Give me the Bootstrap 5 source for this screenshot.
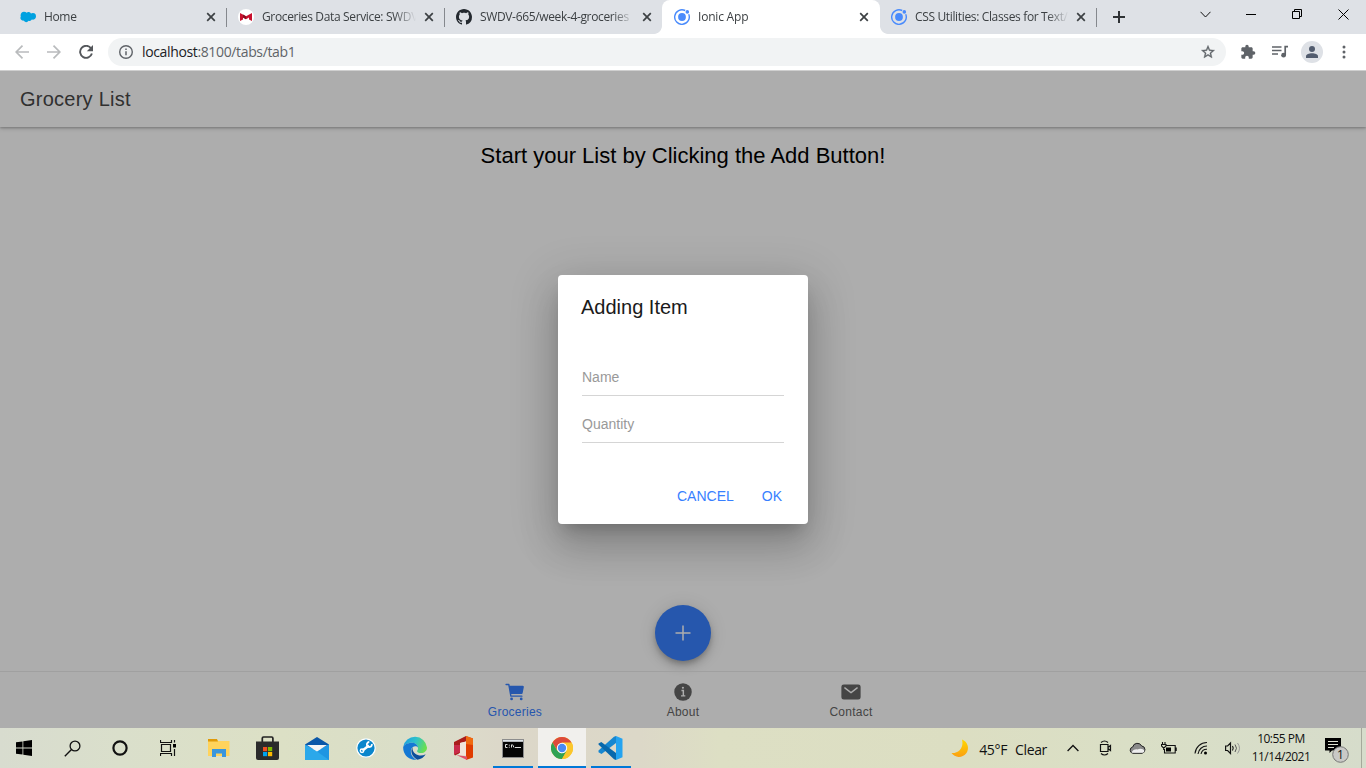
<!DOCTYPE html>
<html lang="en">
<head>
<meta charset="utf-8">
<title>Ionic App</title>
<link href="https://cdn.jsdelivr.net/npm/bootstrap@5.3.0/dist/css/bootstrap.min.css" rel="stylesheet">
<style>
  body{width:1366px;height:768px;overflow:hidden;font-family:"Liberation Sans",Arial,sans-serif;background:#fff;line-height:1.2}
  svg{display:block;flex:none}
  .ui-sys{font-family:"Open Sans","Noto Sans",sans-serif}
  /* tab strip */
  .strip{height:34px;background:#dee1e6;padding-left:8px}
  .b-tab{position:relative;width:218px;height:34px;padding-left:12px;color:#3c4043;font-size:12px;letter-spacing:-.35px}
  .b-tab .ttl{width:154px;margin-left:8px;white-space:nowrap;line-height:18px;-webkit-mask-image:linear-gradient(90deg,#000 132px,transparent 154px);mask-image:linear-gradient(90deg,#000 132px,transparent 154px)}
  .b-tab .x{margin-left:5px}
  .b-tab.sep::after{content:"";position:absolute;right:-1px;top:8px;width:1px;height:19px;background:#85888d}
  .b-tab.on{background:#fff;border-radius:8px 8px 0 0}
  .b-tab.on .x,.b-tab.last .x{margin-left:4px}
  .b-tab.on::before,.b-tab.on::after{content:"";position:absolute;bottom:0;width:8px;height:8px}
  .b-tab.on::before{left:-8px;background:radial-gradient(circle at 0 0,#dee1e6 7.5px,#fff 8.2px)}
  .b-tab.on::after{right:-8px;background:radial-gradient(circle at 100% 0,#dee1e6 7.5px,#fff 8.2px)}
  .b-tab.last{width:216px;padding-left:11px}
  .win{width:46px;height:28px}
  /* toolbar */
  .tools{height:37px;background:#fff;border-bottom:1px solid #cfcfcf;padding-left:6px}
  .tbtn{width:32px;height:36px}
  .omni{width:1118px;height:28px;border-radius:14px;background:#f1f3f4;margin-left:6px;padding:0 10px;font-size:14px;color:#5f6368;letter-spacing:-.36px}
  .omni b{font-weight:400;color:#202124}
  .avatar{width:22px;height:22px;background:#dee1e6}
  /* app */
  .app{height:657px;background:#fff}
  .app-head{height:56px;padding-left:20px;font-size:20px;letter-spacing:.25px;color:#484848;box-shadow:0 1px 2px rgba(0,0,0,.2),0 2px 4px rgba(0,0,0,.14);clip-path:inset(0 0 -6px 0)}
  .hint{font-size:22px;line-height:26px;padding-top:16px;color:#000}
  .fab{width:56px;height:56px;background:#3880ff;margin-bottom:10px;box-shadow:0 3px 5px -1px rgba(0,0,0,.2),0 6px 10px 0 rgba(0,0,0,.14),0 1px 18px 0 rgba(0,0,0,.12)}
  .a-tabs{height:57px;border-top:1px solid #ececec}
  .a-tab{width:168px;padding-top:9px;font-size:12px;letter-spacing:.25px;color:#666}
  .a-tab span{line-height:14px;margin-top:2px}
  .a-tab.cur{color:#3880ff}
  .dim{background:rgba(0,0,0,.32)}
  .dlg{width:250px;height:249px;border-radius:4px;background:#fff;padding:20px 26px 14px 24px;box-shadow:0 11px 15px -7px rgba(0,0,0,.2),0 24px 38px 3px rgba(0,0,0,.14),0 9px 46px 8px rgba(0,0,0,.12)}
  .dlg h2{font-size:20px;font-weight:400;line-height:24px;margin:0 0 39px -1px;color:#1a1a1a}
  .fld{height:38px;border-bottom:1px solid #d5d5d5;font-size:14px;color:#999;line-height:39px;margin-bottom:9px;width:202px}
  .act{font-size:14px;color:#3880ff;gap:28px;padding-top:36px}
  /* taskbar */
  .task{height:40px;background:linear-gradient(90deg,#d8dccf 0,#dadfcb 120px,#dce0c5 280px,#dadec8 400px,#dcdbca 460px,#dcd7c9 510px,#dcd8c8 640px,#dddfc4 720px,#dcdec2 960px,#dadfc6 1130px,#d6dccb 1366px);color:#111}
  .ti{width:48px;height:40px}
  .ti.w{width:49px}
  .run::after{content:"";position:absolute;bottom:0;width:40px;height:2px;background:#0078d7}
  .run.act-w{background:#f1f0ed;width:48px}
  .run.act-w::after{width:48px}
  .tr{width:32px;height:40px}
  .clock{width:72px;font-size:12px;line-height:18px;padding-top:2px;letter-spacing:-.5px}
  .wx{font-size:14px;letter-spacing:-.35px}
  .edge-line{width:5px;height:40px;border-left:1px solid #a5a99b}
</style>
</head>
<body class="d-flex flex-column">
<svg width="0" height="0" class="position-absolute">
  <defs>
    <symbol id="x" viewBox="0 0 16 16"><path d="M4.200 4.200l7.600 7.600M11.800 4.200l-7.600 7.600" stroke="#3c4043" stroke-width="1.700"/></symbol>
    <symbol id="ionic" viewBox="0 0 16 16"><circle cx="8" cy="8" r="3.900" fill="#4a8bfc"/><path d="M11.200 1.500A7.300 7.300 0 1 0 14.700 5.200" fill="none" stroke="#4a8bfc" stroke-width="1.400"/><circle cx="13.300" cy="2.900" r="1.800" fill="#4a8bfc"/></symbol>
  </defs>
</svg>

<header class="strip ui-sys d-flex">
  <div class="b-tab sep d-flex align-items-center">
    <svg width="16" height="16" viewBox="0 0 16 16"><path d="M6.600 3.700a3 3 0 0 1 4.400.8 3.200 3.200 0 0 1 5 2.800c0 2.400-2.100 4-4.200 3.300a2.600 2.600 0 0 1-3.200 1.200 2.900 2.900 0 0 1-5-.2A2.700 2.700 0 0 1 .8 7.600C0 5.200 1.600 2.700 4 2.700c1.100 0 2 .3 2.600 1z" fill="#00a1e0"/></svg>
    <span class="ttl">Home</span><svg class="x" width="16" height="16"><use href="#x"/></svg>
  </div>
  <div class="b-tab sep d-flex align-items-center">
    <svg width="16" height="16" viewBox="0 0 16 16"><circle cx="8" cy="8" r="8" fill="#fff"/><path d="M2 4l6 3.300L14 4v8l-3-1.500V8.500L8 10.300 5 8.500v2L2 12z" fill="#c8102e"/><path d="M5 5.600l3 1.700v3L5 8.500z" fill="#8a0f20"/></svg>
    <span class="ttl">Groceries Data Service: SWDV</span><svg class="x" width="16" height="16"><use href="#x"/></svg>
  </div>
  <div class="b-tab d-flex align-items-center">
    <svg width="16" height="16" viewBox="0 0 16 16"><path fill="#24292f" d="M8 0C3.580 0 0 3.580 0 8c0 3.540 2.290 6.530 5.470 7.590.4.070.55-.17.55-.38 0-.19-.01-.82-.01-1.490-2.010.37-2.530-.49-2.690-.94-.09-.23-.48-.94-.82-1.130-.28-.15-.68-.52-.01-.53.63-.01 1.080.58 1.230.82.720 1.210 1.870.87 2.330.66.070-.52.28-.87.51-1.070-1.780-.2-3.640-.89-3.640-3.950 0-.87.31-1.590.82-2.150-.08-.2-.36-1.020.08-2.120 0 0 .67-.21 2.200.82.64-.18 1.320-.27 2-.27s1.360.09 2 .27c1.530-1.040 2.200-.82 2.200-.82.44 1.100.16 1.920.08 2.120.51.56.82 1.270.82 2.150 0 3.070-1.870 3.750-3.650 3.950.29.25.54.73.54 1.480 0 1.070-.01 1.930-.01 2.200 0 .21.15.46.55.38A8.010 8.010 0 0 0 16 8c0-4.420-3.580-8-8-8z"/></svg>
    <span class="ttl">SWDV-665/week-4-groceries</span><svg class="x" width="16" height="16"><use href="#x"/></svg>
  </div>
  <div class="b-tab on d-flex align-items-center">
    <svg width="16" height="16"><use href="#ionic"/></svg>
    <span class="ttl" style="letter-spacing:-.2px">Ionic App</span><svg class="x" width="16" height="16"><use href="#x"/></svg>
  </div>
  <div class="b-tab last sep d-flex align-items-center">
    <svg width="16" height="16"><use href="#ionic"/></svg>
    <span class="ttl">CSS Utilities: Classes for Text/</span><svg class="x" width="16" height="16"><use href="#x"/></svg>
  </div>
  <div class="d-flex align-items-center ps-3"><svg width="13" height="12" viewBox="-1 0 13 12"><path d="M6 0v12M0 6h12" stroke="#2f3235" stroke-width="2"/></svg></div>
  <div class="ms-auto d-flex">
    <div class="win d-flex align-items-center justify-content-center"><svg width="11" height="7" viewBox="0 0 11 7"><path d="M.5.8l5 5.200 5-5.200" fill="none" stroke="#111"/></svg></div>
    <div class="win d-flex align-items-center justify-content-center"><svg width="10" height="10"><path d="M0 5.500h10" stroke="#000"/></svg></div>
    <div class="win d-flex align-items-center justify-content-center"><svg width="10" height="10"><path d="M.5 2.500h7v7h-7zM2.500 2.500v-2h7v7h-2" fill="none" stroke="#000"/></svg></div>
    <div class="win d-flex align-items-center justify-content-center"><svg width="11" height="11"><path d="M.5.5l10 10M10.500.5l-10 10" stroke="#000"/></svg></div>
  </div>
</header>

<nav class="tools ui-sys d-flex align-items-center">
  <div class="tbtn d-flex align-items-center justify-content-center"><svg width="14" height="14" viewBox="0 0 14 14"><path d="M14 7H1.500M7.500.7L1.200 7l6.300 6.300" fill="none" stroke="#b9bbbd" stroke-width="1.700"/></svg></div>
  <div class="tbtn d-flex align-items-center justify-content-center"><svg width="14" height="14" viewBox="0 0 14 14"><path d="M0 7h12.500M6.500.7L12.800 7l-6.300 6.300" fill="none" stroke="#b9bbbd" stroke-width="1.700"/></svg></div>
  <div class="tbtn d-flex align-items-center justify-content-center"><svg width="14" height="14" viewBox="0 0 14 14"><path d="M12 3.300A6 6 0 1 0 12.900 8.500" fill="none" stroke="#54575b" stroke-width="1.900"/><path d="M14 0v6.200H7.800z" fill="#54575b"/></svg></div>
  <div class="omni d-flex align-items-center">
    <svg width="16" height="16" viewBox="0 0 16 16"><circle cx="8" cy="8" r="6.300" fill="none" stroke="#5f6368" stroke-width="1.400"/><path d="M8 7.200v4M8 4.500v1.500" stroke="#5f6368" stroke-width="1.500"/></svg>
    <span class="ms-2"><b>localhost</b>:8100/tabs/tab1</span>
    <svg class="ms-auto" width="16" height="16" viewBox="0 0 24 24"><path fill="#5f6368" stroke="#5f6368" stroke-width=".5" d="M22 9.240l-7.190-.62L12 2 9.190 8.630 2 9.240l5.460 4.730L5.820 21 12 17.270 18.180 21l-1.630-7.030L22 9.240zM12 15.400l-3.760 2.270 1-4.280-3.320-2.880 4.380-.38L12 6.100l1.710 4.040 4.380.38-3.320 2.880 1 4.280L12 15.400z"/></svg>
  </div>
  <div class="tbtn d-flex align-items-center justify-content-center ms-1"><svg class="ms-1" width="16" height="16" viewBox="0 0 24 24"><path fill="#5f6368" d="M20.500 11H19V7c0-1.100-.9-2-2-2h-4V3.500a2.500 2.500 0 0 0-5 0V5H4c-1.100 0-1.990.9-1.990 2v3.800H3.500c1.490 0 2.700 1.210 2.700 2.700s-1.210 2.700-2.700 2.700H2V20c0 1.100.9 2 2 2h3.800v-1.500c0-1.490 1.210-2.700 2.700-2.700s2.700 1.210 2.700 2.700V22H17c1.100 0 2-.9 2-2v-4h1.500a2.500 2.500 0 0 0 0-5z"/></svg></div>
  <div class="tbtn d-flex align-items-center justify-content-center"><svg class="ms-1" width="17" height="14" viewBox="0 0 17 14"><path d="M0 2h9.500M0 5.500h9.500M0 9h6" stroke="#5f6368" stroke-width="1.500"/><path d="M16 1.700h-2.800V10" fill="none" stroke="#5f6368" stroke-width="1.700"/><circle cx="11.600" cy="10.200" r="2.400" fill="#5f6368"/></svg></div>
  <div class="tbtn d-flex align-items-center justify-content-center ps-1"><div class="avatar rounded-circle d-flex align-items-center justify-content-center"><svg width="12" height="12" viewBox="0 0 12 12"><circle cx="6" cy="3" r="3" fill="#525c6e"/><path d="M0 12v-1.600C0 8.200 3 7.300 6 7.300s6 .9 6 3.100V12z" fill="#525c6e"/></svg></div></div>
  <div class="tbtn d-flex align-items-center justify-content-center ps-1"><svg width="4" height="14" viewBox="0 0 4 14"><g fill="#5f6368"><circle cx="2" cy="2" r="1.500"/><circle cx="2" cy="7" r="1.500"/><circle cx="2" cy="12" r="1.500"/></g></svg></div>
</nav>

<main class="app position-relative d-flex flex-column">
  <div class="app-head d-flex align-items-center">Grocery List</div>
  <div class="hint text-center">Start your List by Clicking the Add Button!</div>
  <div class="fab rounded-circle d-flex align-items-center justify-content-center mt-auto mx-auto"><svg width="16" height="16"><path d="M8 .5v15M.5 8h15" stroke="#fff" stroke-width="1.500"/></svg></div>
  <div class="a-tabs d-flex justify-content-center">
    <div class="a-tab cur d-flex flex-column align-items-center"><svg width="22" height="22" viewBox="0 0 512 512"><g fill="currentColor"><circle cx="176" cy="416" r="32"/><circle cx="400" cy="416" r="32"/><path d="M456.800 120.780a23.920 23.920 0 0 0-18.560-8.780H133.890l-6.130-34.780A16 16 0 0 0 112 64H48a16 16 0 0 0 0 32h50.580l45.660 258.780A16 16 0 0 0 160 368h256a16 16 0 0 0 0-32H173.420l-5.640-32h241.660A24.070 24.070 0 0 0 433 284.710l28.800-144a24 24 0 0 0-5-19.930z"/></g></svg><span>Groceries</span></div>
    <div class="a-tab d-flex flex-column align-items-center"><svg width="22" height="22" viewBox="0 0 512 512"><circle cx="256" cy="256" r="204" fill="currentColor"/><circle cx="254" cy="158" r="25" fill="#fff"/><path d="M220 220h44v124M210 346h100" fill="none" stroke="#fff" stroke-width="34"/></svg><span>About</span></div>
    <div class="a-tab d-flex flex-column align-items-center"><svg width="22" height="22" viewBox="0 0 512 512"><path fill="currentColor" d="M424 80H88a56.060 56.060 0 0 0-56 56v240a56.060 56.060 0 0 0 56 56h336a56.060 56.060 0 0 0 56-56V136a56.060 56.060 0 0 0-56-56zm-14.180 92.630-144 112a16 16 0 0 1-19.640 0l-144-112a16 16 0 1 1 19.640-25.260L256 251.730l134.180-104.360a16 16 0 0 1 19.640 25.260z"/></svg><span>Contact</span></div>
  </div>
  <div class="dim position-absolute top-0 start-0 w-100 h-100 d-flex align-items-center justify-content-center">
    <section class="dlg">
      <h2>Adding Item</h2>
      <div class="fld">Name</div>
      <div class="fld">Quantity</div>
      <div class="act d-flex justify-content-end"><span>CANCEL</span><span>OK</span></div>
    </section>
  </div>
</main>

<footer class="task ui-sys d-flex">
  <div class="ti d-flex align-items-center justify-content-center"><svg width="16" height="16" viewBox="0 0 16 16"><path d="M0 2.300L6.500 1.400V7.600H0zM7.300 1.300L16 0v7.600H7.300zM0 8.400h6.500v6.200L0 13.700zM7.300 8.400H16V16l-8.700-1.200z"/></svg></div>
  <div class="ti d-flex align-items-center justify-content-center"><svg width="17" height="17" viewBox="0 0 17 17"><circle cx="11" cy="6" r="4.900" fill="none" stroke="#111" stroke-width="1.300"/><path d="M7.500 9.500L.8 16.200" stroke="#111" stroke-width="1.400"/></svg></div>
  <div class="ti d-flex align-items-center justify-content-center"><svg width="16" height="16"><circle cx="8" cy="8" r="6.600" fill="none" stroke="#111" stroke-width="2.200"/></svg></div>
  <div class="ti d-flex align-items-center justify-content-center"><svg width="17" height="16"><path d="M.5 0v2.500h11V0M.5 16v-2.500h11V16M1.500 4.500h9v7h-9z" fill="none" stroke="#111" stroke-width="1.200"/><path d="M14.500 0v2.500M14.500 9v7" stroke="#111" stroke-width="1.200"/><path d="M13 4h3v3.500h-3z"/></svg></div>
  <div class="ti w d-flex align-items-center justify-content-center" style="margin-left:2px"><svg width="22" height="20" viewBox="0 0 22 20"><path d="M0 1h8.500l1.500 2H21.500v15H0z" fill="#ffd35c"/><path d="M0 1h9l1 2.500H0z" fill="#e09a08"/><path d="M4 19V11h14v8h-4V15.500H8V19z" fill="#3a96dd"/></svg></div>
  <div class="ti w d-flex align-items-center justify-content-center"><svg width="23" height="24" viewBox="0 0 23 24"><path d="M6.300 6V2.200a1.200 1.200 0 0 1 1.200-1.200h8.200a1.200 1.200 0 0 1 1.200 1.200V6" fill="none" stroke="#222" stroke-width="1.700"/><path d="M0 5.500h23V22a2 2 0 0 1-2 2H2a2 2 0 0 1-2-2z" fill="#2b2b2b"/><path fill="#f25022" d="M7 11h4.200v4.200H7z"/><path fill="#7fba00" d="M12 11h4.200v4.200H12z"/><path fill="#00a4ef" d="M7 16h4.200v4.200H7z"/><path fill="#ffb900" d="M12 16h4.200v4.200H12z"/></svg></div>
  <div class="ti w d-flex align-items-center justify-content-center"><svg width="24" height="23" viewBox="0 0 24 23"><path d="M0 7.500L12 0l12 7.500V12H0z" fill="#0a57a8"/><path d="M0 7.500l12 6.500 12-6.500V23H0z" fill="#2ba8ea"/><path d="M12 14.500L24 7.500V23z" fill="#1e96e2"/><path d="M2 8h20l-10 6.500z" fill="#f5f5f5"/></svg></div>
  <div class="ti w d-flex align-items-center justify-content-center"><svg width="20" height="20" viewBox="0 0 20 20"><circle cx="10" cy="10" r="9.200" fill="#0a86cc" stroke="#fff" stroke-width="1.200"/><path d="M6.500 12.500l6.500-5" stroke="#fff" stroke-width="2.500"/><circle cx="6" cy="12.800" r="1.700" fill="none" stroke="#fff" stroke-width="1.500"/><path d="M15.800 6a2.500 2.500 0 1 1-2.500-2" fill="none" stroke="#fff" stroke-width="1.800"/></svg></div>
  <div class="ti w d-flex align-items-center justify-content-center"><svg width="24" height="24" viewBox="0 0 24 24"><defs><linearGradient id="eg" x1="0" x2="1" y1=".2" y2=".5"><stop offset="0" stop-color="#1b9de2"/><stop offset=".5" stop-color="#2fc2c9"/><stop offset="1" stop-color="#6be04e"/></linearGradient></defs><path d="M.2 11A12 12 0 0 1 24 11.500c0 3.600-2.700 5.500-5.700 5.500-2.800 0-4.300-1-4.300-1.800 0-.6 1-1 1-3C15 9 12 6.800 8.800 6.800 4 6.800.6 9.500.2 11z" fill="url(#eg)"/><path d="M.2 11C.8 9 4.500 6.800 8.800 6.800c3.300 0 6 2.100 6.200 4.800C13.700 9.500 9 9.500 8 14c-.9 4 2 8.500 6 9.700A12 12 0 0 1 .2 11z" fill="#1478d4"/><path d="M9.500 11.200C7 15 8.700 20.500 14.500 23.800c3.500-.5 6.500-2.600 8.200-5.500-3.300 1.900-7.700 1.700-10.400-.5-2-1.700-3-4-2.800-6.600z" fill="#0c4f9c"/></svg></div>
  <div class="ti w d-flex align-items-center justify-content-center"><svg width="19" height="24" viewBox="0 0 19 24"><path d="M12 0l7 2.500v19L12 24z" fill="#e03c00"/><path d="M12 0v5.500L6 7v10L1 19.500 0 18V6z" fill="#a91c1c"/><path d="M0 9v9.500L6 16V9z" fill="#c92a4a"/><path d="M2.500 19L13 20.500V24z" fill="#e0506a"/><path d="M6 7l6-1.500v14L4.500 19 6 16.500z" fill="#f0e4dc"/><path d="M12 0l7 2.500V9l-7-1z" fill="#ef6a10"/></svg></div>
  <div class="ti run d-flex align-items-center justify-content-center position-relative" style="margin:0 1px"><svg width="22" height="19" viewBox="0 0 22 19"><path fill="#8d8d8d" d="M0 0h22v19H0z"/><path fill="#dde3e8" d="M1 1h20v1.500H1z"/><path fill="#050505" d="M1 3h20v15H1z"/><path d="M5.500 5.500H3.500v3h2M7.300 5.700v1M7.300 7.700v1M9.500 5.500v3M10.500 5.500l1.500 3M13 8.500h6" fill="none" stroke="#ddd"/></svg></div>
  <div class="ti run act-w d-flex align-items-center justify-content-center position-relative"><svg width="22" height="22" viewBox="0 0 22 22"><circle cx="11" cy="11" r="11" fill="#fbc62c"/><path d="M1.500 5.500A11 11 0 0 1 20.500 5.500H11L6.500 13.700z" fill="#dd4a3b"/><path d="M1.470 5.500l4.800 8.200L11 16.500 11 22A11 11 0 0 1 1.470 5.500z" fill="#2fa255"/><path d="M11 22l4.700-8.300-9.400 0L11 16z" fill="#2fa255"/><path d="M20.530 5.500A11 11 0 0 1 11 22l4.760-8.250L15.800 8z" fill="#fbc62c"/><circle cx="11" cy="11" r="5.200" fill="#fff"/><circle cx="11" cy="11" r="4.200" fill="#4a8af4"/></svg></div>
  <div class="ti w run d-flex align-items-center justify-content-center position-relative"><svg width="25" height="24" viewBox="0 0 25 24"><path d="M18 0v7L3.500 18 .5 16.200V14.500L16 .8z" fill="#1686d0"/><path d="M.5 8.500v-1L3.300 6 18 17v7l-2-.8z" fill="#0868ac"/><path d="M18 0l6.500 2.800v18.500L18 24z" fill="#24a3f0"/></svg></div>

  <div class="d-flex align-items-center ms-auto wx">
    <svg width="19" height="19" viewBox="0 0 19 19"><defs><linearGradient id="mg" x2="0" y2="1"><stop offset="0" stop-color="#ffd800"/><stop offset="1" stop-color="#fb9f12"/></linearGradient></defs><path d="M11 .5a9 9 0 1 1-10.500 13.500C8 14.500 13 8.500 11 .5z" fill="url(#mg)"/></svg>
    <span class="pt-1" style="margin-left:9px">45°F</span><span class="ms-2 pt-1">Clear</span>
  </div>
  <div class="d-flex" style="margin-left:10px">
    <div class="tr d-flex align-items-center justify-content-center"><svg width="12" height="8"><path d="M.6 7L6 1.500 11.400 7" fill="none" stroke="#111" stroke-width="1.300"/></svg></div>
    <div class="tr d-flex align-items-center justify-content-center"><svg width="13" height="16" viewBox="0 0 13 16"><path d="M2 2.500Q5.500-.5 9 2.500M2 13.500q3.500 3 7 0M1.500 4.500h7.500v7H1.500zM9 7.500l2.500-2v5L9 8.500" fill="none" stroke="#111" stroke-width="1.200"/></svg></div>
    <div class="tr d-flex align-items-center justify-content-center"><svg width="17" height="12" viewBox="0 0 17 12"><path d="M4 11.300a3.200 3.200 0 0 1-.3-6.300A4.800 4.800 0 0 1 12.700 4a3.700 3.700 0 0 1 .3 7.300z" fill="#8a8a8a" stroke="#222"/><path d="M2.500 10.800c1-3 4-4 6-3.400 2-1.200 6-1 7 1.500-.5 1.400-1.500 1.900-2.500 1.900z" fill="#eee"/></svg></div>
    <div class="tr d-flex align-items-center justify-content-center"><svg width="16" height="13" viewBox="0 0 16 13"><path d="M5.500 3.500h8.700v7.500H3.500V7M15.200 5.500v3.500M1.500 0v2M4 0v2M.5 2.500h4.500v1.500L3.500 5.500H2L.5 4zM2.700 5.500V8" fill="none" stroke="#111" stroke-width="1.100"/><path d="M5 5.500h5v4H5z"/></svg></div>
    <div class="tr d-flex align-items-center justify-content-center"><svg width="14" height="14" viewBox="0 0 14 14"><path d="M1 12.500A12 12 0 0 1 13 1.500M4 13a9 9 0 0 1 9-8M7 13a6 6 0 0 1 6-4.800" fill="none" stroke="#111" stroke-width="1.100"/><circle cx="11.500" cy="12" r="1.500"/></svg></div>
    <div class="tr d-flex align-items-center justify-content-center"><svg width="17" height="14" viewBox="0 0 17 14"><path d="M.6 5h2L5.500 2v10.500L2.600 9.500h-2zM7.500 5q1.500 2.200 0 4.500" fill="none" stroke="#111" stroke-width="1.200"/><path d="M10 3.500q3 3.700 0 7.500" fill="none" stroke="#555"/><path d="M12.500 2q4 5.200 0 10.500" fill="none" stroke="#999"/></svg></div>
  </div>
  <div class="clock text-center" style="margin-left:-4px">10:55 PM<br>11/14/2021</div>
  <div class="d-flex align-items-center" style="width:44px;padding-left:8px"><svg width="26" height="32" viewBox="0 0 26 32"><path d="M0 6h16v12.500H7L4.500 21v-2.500H0z"/><path d="M3 9.500h10M3 12.500h10M3 15.500h6" stroke="#dde0d0"/><circle cx="15.500" cy="22.500" r="7.800" fill="#c9c9c6" stroke="#777"/><text x="15.500" y="26.500" font-size="12" text-anchor="middle" fill="#111">1</text></svg></div>
  <div class="edge-line"></div>
</footer>
<script src="https://cdn.jsdelivr.net/npm/bootstrap@5.3.0/dist/js/bootstrap.bundle.min.js"></script>
</body>
</html>
